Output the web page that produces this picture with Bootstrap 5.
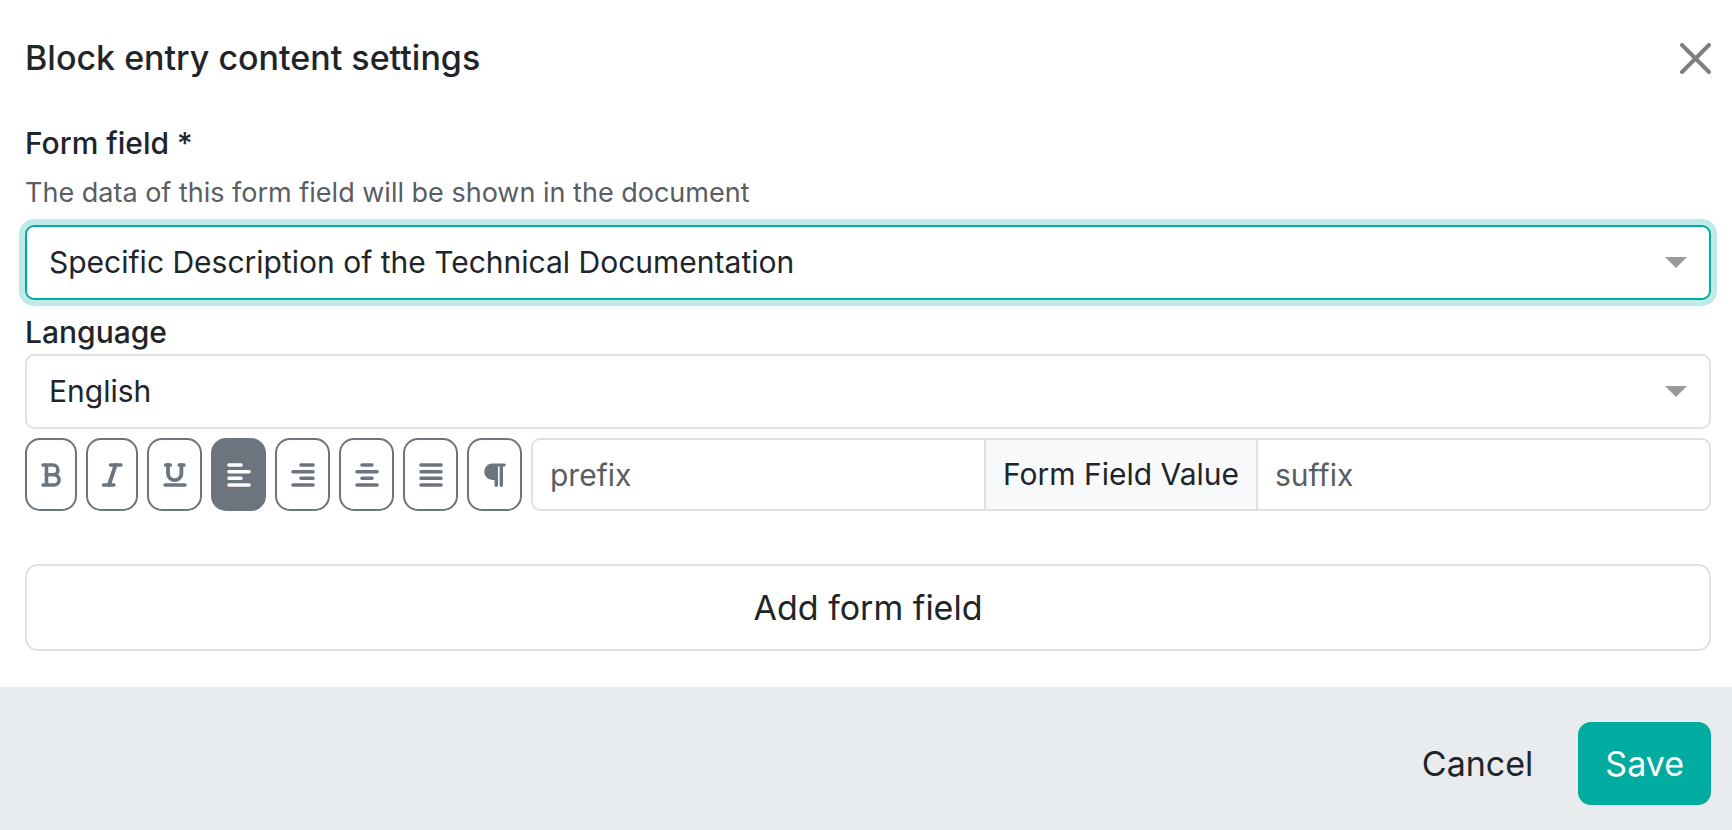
<!DOCTYPE html>
<html lang="en">
<head>
<meta charset="utf-8">
<meta name="viewport" content="width=device-width, initial-scale=1">
<title>Block entry content settings</title>
<link href="https://cdn.jsdelivr.net/npm/bootstrap@5.3.0/dist/css/bootstrap.min.css" rel="stylesheet">
<style>
:root { --teal: #00ab9f; --line: #dee2e6; --slate: #6c757d; }
body { font-family: Inter, "Liberation Sans", sans-serif; font-size: 30px; line-height: 45px; color: #212529; }
.dialog-header { padding: 31px 21px 0 25px; }
.dialog-title { font-size: 34px; line-height: 54px; font-weight: 500; }
.close-btn { width: 31px; height: 31px; color: #7f7f7f; }
.dialog-body { padding: 37px 21px 36px 25px; }
.field-label { font-size: 30px; line-height: 43px; font-weight: 500; }
.field-select + .field-label { margin-top: 11px; }
.field-hint { font-size: 27px; line-height: 40px; color: #5a5d61; margin: 8px 0 12px; }
.field-select { height: 75px; border: 2px solid var(--line); border-radius: 9px; padding: 0 72px 0 22px; font-size: 30px; line-height: 45px; color: #212529;
  background-image: url("data:image/svg+xml,%3csvg xmlns='http://www.w3.org/2000/svg' viewBox='0 0 22 11'%3e%3cpath fill='%23999' d='M0 0h22L11 11z'/%3e%3c/svg%3e");
  background-size: 22px 11px; background-position: right 22px center; }
.field-select:focus { border-color: var(--teal); box-shadow: 0 0 0 6px rgba(0, 171, 159, .25); }
.toolbar-row { gap: 9px; margin-top: 9px; }
.tool-btn { flex: none; width: 55px; height: 73px; padding: 0; border: 2px solid var(--slate); border-radius: 15px; color: var(--slate); }
.tool-btn.narrow { width: 52px; }
.tool-btn.active { background: var(--slate); border-color: var(--slate); color: #fff; }
.tool-btn svg { width: 24px; height: 24px; display: block; margin: auto; }
.value-group { width: auto; min-width: 0; }
.value-group .form-control, .value-group .input-group-text { height: 73px; border: 2px solid var(--line); border-radius: 9px; padding: 0 17px; font-size: 30px; line-height: 45px; }
.value-group .input-group-text { background: #f8f9fa; color: #212529; }
.value-group > * + * { margin-left: -2px !important; }
.value-group .form-control::placeholder { color: #5a5d61; }
.add-btn { height: 87px; margin-top: 53px; border: 2px solid var(--line); border-radius: 13px; font-size: 34px; }
.dialog-footer { background: #e9ecef; gap: 18px; padding: 35px 21px 24px; }
.dialog-footer .btn { height: 83px; border: 0; border-radius: 13px; padding: 0 27px; font-size: 34px; }
.save-btn, .save-btn:hover { background: var(--teal); color: #fff; }
</style>
</head>
<body class="bg-white">
<form class="d-flex flex-column min-vh-100">
  <header class="dialog-header d-flex align-items-center justify-content-between">
    <h1 class="dialog-title m-0">Block entry content settings</h1>
    <button type="button" class="btn p-0 border-0 close-btn d-flex" aria-label="Close">
      <svg viewBox="0 0 31 31" width="31" height="31" fill="none" stroke="currentColor" stroke-width="4" stroke-linecap="round"><path d="M2 2l27 27M29 2L2 29"/></svg>
    </button>
  </header>
  <main class="dialog-body">
    <label class="field-label d-block" for="field">Form field *</label>
    <p class="field-hint" id="hint">The data of this form field will be shown in the document</p>
    <select class="form-select field-select" id="field" aria-describedby="hint" autofocus>
      <option>Specific Description of the Technical Documentation</option>
    </select>
    <label class="field-label d-block" for="language">Language</label>
    <select class="form-select field-select" id="language">
      <option>English</option>
    </select>
    <div class="toolbar-row d-flex">
      <button type="button" class="btn tool-btn narrow" aria-label="Bold"><svg viewBox="0 0 24 24" fill="none" stroke="currentColor" stroke-width="3.6" stroke-linecap="round" stroke-linejoin="round"><path d="M4 2H14a4.700 4.700 0 0 1 0 9.800H7M14 11.800h1a5 5 0 0 1 0 10.200H4M7.500 2v20"/></svg></button>
      <button type="button" class="btn tool-btn narrow" aria-label="Italic"><svg viewBox="0 0 24 24" fill="none" stroke="currentColor" stroke-width="3.4" stroke-linecap="round"><path d="M10.500 2h10.500M3.500 22h10.500"/><path d="M15.500 2L9 22" stroke-width="4"/></svg></button>
      <button type="button" class="btn tool-btn" aria-label="Underline"><svg viewBox="0 0 24 24" fill="none" stroke="currentColor" stroke-width="3.4" stroke-linecap="round"><path d="M2.500 2h5M16 2h5M2 22h20"/><path d="M5 2v8.500a6.700 6.700 0 0 0 13.400 0V2" stroke-width="3.8"/></svg></button>
      <button type="button" class="btn tool-btn active" aria-label="Align left" aria-pressed="true"><svg viewBox="0 0 24 24" fill="none" stroke="currentColor" stroke-width="3.6" stroke-linecap="round"><path d="M2 2h12M2 8.700h20M2 15.300h12M2 22h20"/></svg></button>
      <button type="button" class="btn tool-btn" aria-label="Align right"><svg viewBox="0 0 24 24" fill="none" stroke="currentColor" stroke-width="3.6" stroke-linecap="round"><path d="M10 2h12M2 8.700h20M10 15.300h12M2 22h20"/></svg></button>
      <button type="button" class="btn tool-btn" aria-label="Align center"><svg viewBox="0 0 24 24" fill="none" stroke="currentColor" stroke-width="3.6" stroke-linecap="round"><path d="M7 2h10M2 8.700h20M7 15.300h10M2 22h20"/></svg></button>
      <button type="button" class="btn tool-btn" aria-label="Justify"><svg viewBox="0 0 24 24" fill="none" stroke="currentColor" stroke-width="3.6" stroke-linecap="round"><path d="M2 2h20M2 8.700h20M2 15.300h20M2 22h20"/></svg></button>
      <button type="button" class="btn tool-btn" aria-label="Paragraph"><svg viewBox="0 0 24 24" fill="currentColor"><path d="M9.500.4h11.700a1.600 1.600 0 0 1 0 3.200H20v18.600a1.600 1.600 0 0 1-3.400 0V3.600h-1.600v18.600a1.600 1.600 0 0 1-3.500 0V17h-2A8.300 8.300 0 0 1 9.500.4z"/></svg></button>
      <div class="input-group value-group flex-grow-1 flex-nowrap">
        <input type="text" class="form-control" placeholder="prefix" aria-label="prefix">
        <span class="input-group-text">Form Field Value</span>
        <input type="text" class="form-control" placeholder="suffix" aria-label="suffix">
      </div>
    </div>
    <button type="button" class="btn add-btn w-100">Add form field</button>
  </main>
  <footer class="dialog-footer d-flex justify-content-end align-items-start flex-grow-1">
    <button type="button" class="btn">Cancel</button>
    <button type="submit" class="btn save-btn">Save</button>
  </footer>
</form>
<script src="https://cdn.jsdelivr.net/npm/bootstrap@5.3.0/dist/js/bootstrap.bundle.min.js"></script>
</body>
</html>
